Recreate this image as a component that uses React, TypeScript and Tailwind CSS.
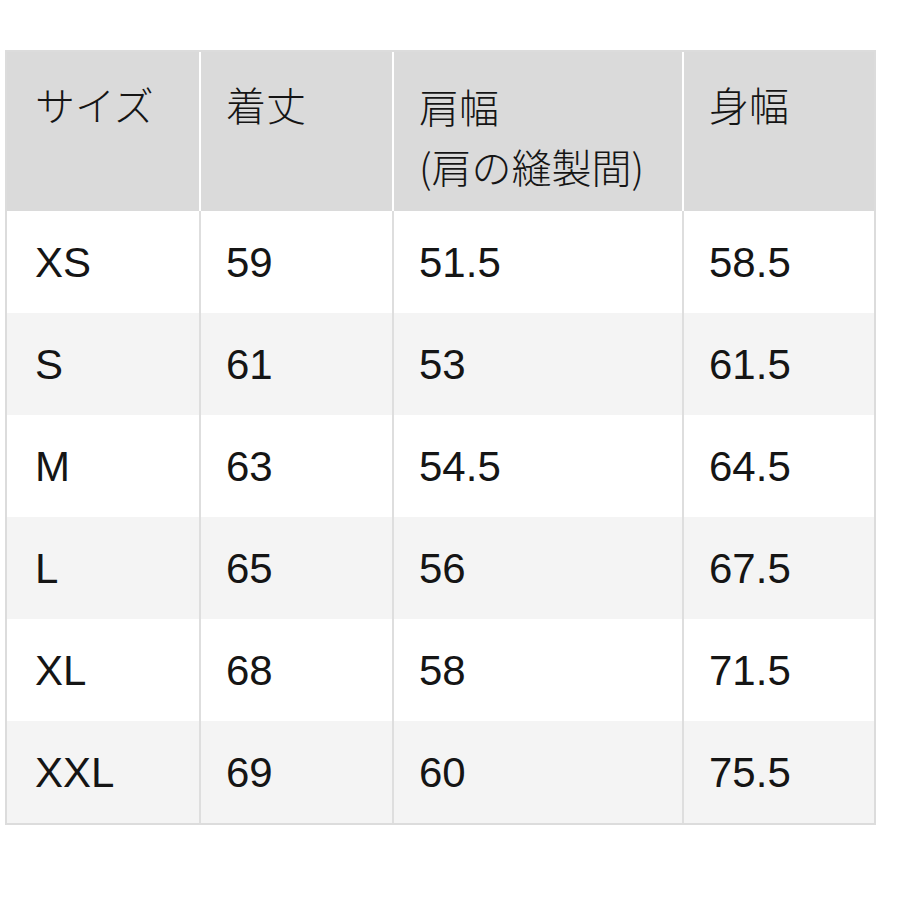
import React from "react";

const rows = [
  ["XS", "59", "51.5", "58.5"],
  ["S", "61", "53", "61.5"],
  ["M", "63", "54.5", "64.5"],
  ["L", "65", "56", "67.5"],
  ["XL", "68", "58", "71.5"],
  ["XXL", "69", "60", "75.5"],
];

export default function App() {
  return (
    <div
      className="w-[900px] h-[900px] bg-white pt-[50px] pl-[5px]"
      style={{ fontFamily: '"Liberation Sans", "Noto Sans CJK JP", sans-serif' }}
    >
      <div className="w-[871px] border-2 border-[#dcdcdc] text-[#151515]">
        <div
          className="grid grid-cols-[194px_193px_290px_190px] bg-[#dadada] h-[159px] text-[40px] font-light"
          style={{ fontFamily: '"Noto Sans CJK JP", sans-serif' }}
        >
          <div className="border-r-2 border-white pl-[28px] pt-[24px] leading-[56px]">サイズ</div>
          <div className="border-r-2 border-white pl-[25px] pt-[24px] leading-[56px]">着丈</div>
          <div className="border-r-2 border-white pl-[25px] pt-[24px] leading-[60px]">
            <div>肩幅</div>
            <div>(肩の縫製間)</div>
          </div>
          <div className="pl-[25px] pt-[24px] leading-[56px]">身幅</div>
        </div>
        {rows.map((r, i) => (
          <div
            key={i}
            className={
              "grid grid-cols-[194px_193px_290px_190px] h-[102px] text-[42px] " +
              (i % 2 === 0 ? "bg-white" : "bg-[#f4f4f4]")
            }
          >
            {r.map((c, j) => (
              <div
                key={j}
                className={
                  "flex items-center " +
                  (j === 0 ? "pl-[28px] " : "pl-[25px] ") +
                  (j < 3 ? "border-r-2 border-[#dedede]" : "")
                }
              >
                {c}
              </div>
            ))}
          </div>
        ))}
      </div>
    </div>
  );
}
